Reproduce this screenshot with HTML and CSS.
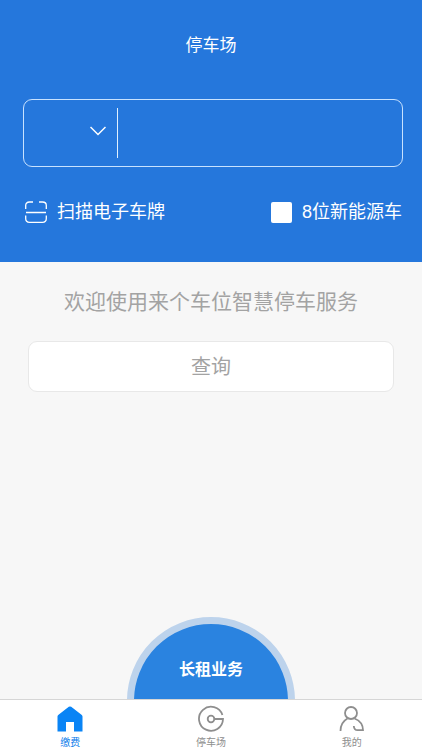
FILE: index.html
```html
<!DOCTYPE html>
<html lang="zh-CN">
<head>
<meta charset="utf-8">
<meta name="viewport" content="width=device-width, initial-scale=1">
<title>停车场</title>
<link rel="stylesheet" href="styles.css">
</head>
<body>
<header class="hero">
  <h1 class="title">停车场</h1>
  <form class="plate" id="query">
    <div class="region">
      <select class="region-select" aria-label="省份"><option></option></select>
      <svg class="chevron" width="16" height="10" viewBox="0 0 16 10" aria-hidden="true"><path d="M.5 1L8 8.500 15.500 1"/></svg>
    </div>
    <input class="plate-input" type="text" aria-label="车牌号">
  </form>
  <div class="options">
    <button class="scan" type="button">
      <svg class="scan-icon" width="22" height="22" viewBox="0 0 22 22" aria-hidden="true"><path d="M.7 8V4.500Q.7 1 4.500 1H8M14 1h3.500q3.800 0 3.800 3.500V8M.7 14.500v3q0 3.800 3.800 3.800h13q3.800 0 3.800-3.800v-3M1 11.500h20"/></svg>
      扫描电子车牌
    </button>
    <label class="energy"><input class="check" type="checkbox">8位新能源车</label>
  </div>
</header>
<main class="content">
  <p class="welcome">欢迎使用来个车位智慧停车服务</p>
  <button class="submit" type="submit" form="query">查询</button>
  <div class="dome">
    <button class="rental" type="button">长租业务</button>
  </div>
</main>
<nav class="tabs">
  <a class="tab active" href="#pay">
    <svg class="tab-icon" width="28" height="28" viewBox="0 0 28 28" aria-hidden="true"><path class="house" d="M12.800 1.800q1.200-.8 2.400 0L25.800 10q.7.600.7 1.400V26.500H18V17h-8v9.500H1.500V11.400q0-.8.7-1.400z"/></svg>
    缴费
  </a>
  <a class="tab" href="#lots">
    <svg class="tab-icon" width="28" height="28" viewBox="0 0 28 28" aria-hidden="true"><path d="M25.400 10A12 12 0 1 0 26 14H17.300"/><circle cx="14" cy="14" r="3.300"/></svg>
    停车场
  </a>
  <a class="tab" href="#mine">
    <svg class="tab-icon" width="28" height="28" viewBox="0 0 28 28" aria-hidden="true"><circle cx="13" cy="8" r="6"/><path d="M2.500 26C2.500 20 5 16 9.500 13.500M16.500 13.500C21.500 15.500 25 19.500 25 25.200H19.500C17.500 25.200 16 23.800 15.800 21"/></svg>
    我的
  </a>
</nav>
</body>
</html>
```
FILE: styles.css
```css
* {
  box-sizing: border-box;
}

body {
  margin: 0;
  min-height: 100vh;
  display: flex;
  flex-direction: column;
  background: #f7f7f7;
  font-family: "Liberation Sans", "Noto Sans CJK SC", sans-serif;
}

button,
input,
select {
  margin: 0;
  padding: 0;
  border: 0;
  background: none;
  color: inherit;
  font: inherit;
}

svg {
  flex: none;
  fill: none;
  stroke: currentColor;
}

.hero {
  padding: 34px 20px 37px;
  background: #2577dc;
  color: #fff;
}

.title {
  margin: 0 0 41px;
  font-size: 17px;
  font-weight: 400;
  line-height: 24px;
  text-align: center;
}

.plate {
  display: flex;
  height: 68px;
  margin: 0 -1px 0 3px;
  padding: 8px 0;
  border: 1px solid #c8e2ff;
  border-radius: 9px;
}

.region {
  display: grid;
  grid-template-columns: 1fr 16px;
  align-items: center;
  width: 94px;
  padding-right: 11px;
  border-right: 1px solid #e0f0ff;
}

.region-select {
  grid-area: 1 / 1 / 2 / 3;
  width: 100%;
  height: 100%;
  appearance: none;
}

.chevron {
  grid-area: 1 / 2;
  margin-bottom: 4px;
  stroke-width: 1.500;
  pointer-events: none;
}

.plate-input {
  flex: 1;
  min-width: 0;
  padding: 0 12px;
  font-size: 24px;
}

.options {
  display: flex;
  justify-content: space-between;
  align-items: center;
  margin-top: 32px;
  padding: 0 0 0 5px;
  font-size: 18px;
  line-height: 26px;
}

.scan,
.energy {
  display: flex;
  align-items: center;
  gap: 10px;
}

.scan-icon {
  stroke-width: 1.300;
}

.check {
  width: 21px;
  height: 21px;
  border-radius: 2px;
  background: #fff;
  appearance: none;
}

.check:checked {
  border: 5px solid #fff;
  background: #2577dc;
}

.content {
  flex: 1;
  display: flex;
  flex-direction: column;
  padding: 24px 28px 0;
  color: #a3a3a3;
}

.welcome {
  margin: 0 0 24px;
  font-size: 21px;
  line-height: 31px;
  text-align: center;
}

.submit {
  height: 51px;
  padding-bottom: 2px;
  border: 1px solid #e8e8e8;
  border-radius: 9px;
  background: #fff;
  font-size: 20px;
}

.dome {
  align-self: center;
  height: 82px;
  margin-top: auto;
  overflow: hidden;
}

.rental {
  display: block;
  width: 168px;
  height: 168px;
  padding-bottom: 66px;
  border: 7px solid #bdd3ec;
  border-radius: 50%;
  background: #2a83e0;
  color: #fff;
  font-size: 16px;
  font-weight: 700;
}

.tabs {
  display: flex;
  height: 51px;
  border-top: 1px solid #d6d6d6;
  background: #fff;
}

.tab {
  flex: 1;
  display: flex;
  flex-direction: column;
  align-items: center;
  gap: 2px;
  padding-top: 5px;
  color: #8e8e8e;
  font-size: 10px;
  line-height: 15px;
  text-decoration: none;
}

.tab-icon {
  stroke-width: 1.800;
}

.active {
  color: #0a7bea;
}

.house {
  fill: #0a84f5;
  stroke: none;
}
```
